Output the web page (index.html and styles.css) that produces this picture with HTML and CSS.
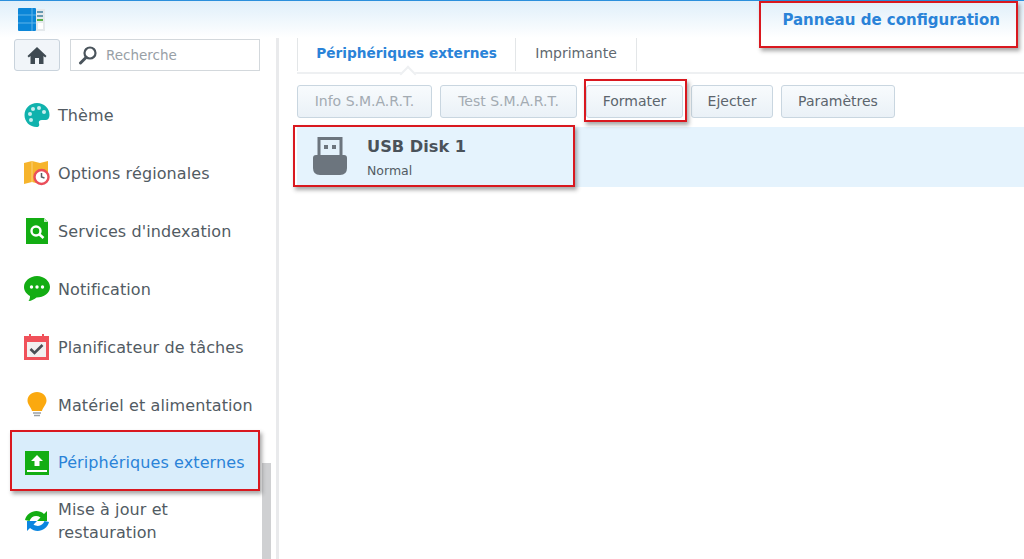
FILE: index.html
```html
<!DOCTYPE html>
<html lang="fr">
<head>
    <meta charset="UTF-8">
    <title>Panneau de configuration</title>
    <link rel="stylesheet" href="styles.css">
</head>
<body>
<div class="topbar">
    <svg class="logo" width="28" height="24" viewBox="0 0 28 24">
        <rect x="0" y="0" width="18" height="23" rx="1" fill="#0b86d8"/>
        <path d="M0 7h18M0 15h18M14 0v23" stroke="#5fb4ea" stroke-width="1"/>
        <rect x="18" y="1" width="9" height="22" fill="#e4e9ec"/>
        <path d="M19 4h6M19 8h6" stroke="#3f7f9c" stroke-width="1.500"/>
        <path d="M19 12h6" stroke="#58b04a" stroke-width="2"/>
        <rect x="20" y="15" width="5" height="6" fill="#fff"/>
    </svg>
    <div class="window-title">Panneau de configuration</div>
</div>
<div class="layout">
    <div class="sidebar">
        <div class="search-row">
            <div class="home-btn">
                <svg width="20" height="19" viewBox="0 0 20 19"><path d="M10 1 0.5 10l1.300 1.400L3.500 9.900V18h4.500v-6h4v6h4.500V9.900l1.700 1.500L19.500 10z" fill="#3f4a52"/></svg>
            </div>
            <div class="search-box">
                <svg width="20" height="20" viewBox="0 0 20 20"><circle cx="12" cy="8" r="5.500" fill="none" stroke="#4a545c" stroke-width="2.200"/><path d="M8 12.500 2.500 18" stroke="#4a545c" stroke-width="3" stroke-linecap="round"/></svg>
                <span>Recherche</span>
            </div>
        </div>
        <div class="menu">
            <div class="menu-item">
                <svg width="26" height="26" viewBox="0 0 26 26"><path d="M13 1C6 1 .5 6 .5 13S6 25 12.500 25c3 0 3-2 2.500-3.500-.7-2 .5-3.500 3-3.500h3.500c2.500 0 4-2 4-5C25.500 6 20 1 13 1z" fill="#10b2ad"/><circle cx="6" cy="12" r="2" fill="#c6eeee"/><circle cx="9" cy="7" r="2" fill="#c6eeee"/><circle cx="15" cy="6" r="2" fill="#c6eeee"/><circle cx="7" cy="18" r="2" fill="#c6eeee"/><circle cx="20" cy="10" r="2" fill="#c6eeee"/></svg>
                <span>Thème</span>
            </div>
            <div class="menu-item">
                <svg width="26" height="26" viewBox="0 0 26 26"><path d="M0 3l8-2 8 2 8-2v14H16v9l-8-2-8 2z" fill="#f6b42c"/><path d="M8 1v21" stroke="#fbd27a" stroke-width="1"/><circle cx="17.500" cy="17" r="7" fill="#fff" stroke="#ea4e5a" stroke-width="2.400"/><path d="M17.500 13v4l3 1" fill="none" stroke="#5a5f66" stroke-width="1.500"/></svg>
                <span>Options régionales</span>
            </div>
            <div class="menu-item">
                <svg width="26" height="26" viewBox="0 0 26 26"><path d="M2 0h18l4 4v22H2z" fill="#13ad13"/><path d="M20 0l4 4h-4z" fill="#bfeabf"/><circle cx="12" cy="13" r="4.500" fill="none" stroke="#fff" stroke-width="2.400"/><path d="M15.500 16.500l4 3.500" stroke="#fff" stroke-width="2.600"/></svg>
                <span>Services d'indexation</span>
            </div>
            <div class="menu-item">
                <svg width="26" height="26" viewBox="0 0 26 26"><path d="M13 0C6 0 0 5 0 11c0 4 2.500 7 6 9 0 2-.5 4-1.500 5 3 0 6-2 8-3.500 7.500 0 13.500-4.500 13.500-10.500S20 0 13 0z" fill="#13ad13"/><circle cx="7.500" cy="11" r="1.700" fill="#fff"/><circle cx="13" cy="11" r="1.700" fill="#fff"/><circle cx="18.500" cy="11" r="1.700" fill="#fff"/></svg>
                <span>Notification</span>
            </div>
            <div class="menu-item">
                <svg width="26" height="26" viewBox="0 0 26 26"><rect x="0" y="2" width="25" height="24" fill="#f0515a"/><rect x="3" y="8" width="19" height="15" fill="#f2f0f0"/><rect x="5" y="0" width="2" height="4" fill="#f0515a"/><rect x="18" y="0" width="2" height="4" fill="#f0515a"/><path d="M6.500 15l4 4 8-8" fill="none" stroke="#4a4f56" stroke-width="2.600"/></svg>
                <span>Planificateur de tâches</span>
            </div>
            <div class="menu-item">
                <svg width="26" height="26" viewBox="0 0 26 26"><path d="M13 0c-5.500 0-9.500 4-9.500 8.500 0 4 3.500 6.500 4.500 10.500h10c1-4 4.500-6.500 4.500-10.500C22.500 4 18.500 0 13 0z" fill="#fba90f"/><path d="M9 21h8M10 23.500h6" stroke="#9aa0a5" stroke-width="1.600"/></svg>
                <span>Matériel et alimentation</span>
            </div>
            <div class="menu-item selected">
                <svg width="26" height="26" viewBox="0 0 26 26"><rect x="1" y="1" width="24" height="24" fill="#13ad13"/><path d="M13 5l6 6h-3.500v5h-5v-5H7z" fill="#fff"/><rect x="3" y="20" width="20" height="2" fill="#fff"/></svg>
                <span>Périphériques externes</span>
            </div>
            <div class="menu-item">
                <svg width="26" height="26" viewBox="0 0 26 26"><path d="M1 12C3 4 13 0 20 6l3-3v10h-10l3.500-3.500C12 6.500 7 8.500 5.500 13z" fill="#13ad13"/><path d="M25 14c-2 8-12 12-19 6l-3 3V13h10l-3.500 3.500C14 19.500 19 17.500 20.500 13z" fill="#0b86e0"/></svg>
                <span>Mise à jour et<br>restauration</span>
            </div>
        </div>
        <div class="scrollbar"></div>
    </div>
    <div class="main">
        <div class="tabs">
            <div class="tab active">Périphériques externes</div>
            <div class="tab">Imprimante</div>
        </div>
        <div class="toolbar">
            <div class="btn disabled info">Info S.M.A.R.T.</div>
            <div class="btn disabled test">Test S.M.A.R.T.</div>
            <div class="btn format">Formater</div>
            <div class="btn eject">Ejecter</div>
            <div class="btn params">Paramètres</div>
        </div>
        <div class="disk-row">
            <svg width="34" height="38" viewBox="0 0 34 38"><path d="M6 1.500h22v18H6z" fill="#e3f1fb" stroke="#6c757e" stroke-width="3"/><rect x="11" y="8" width="4" height="4" fill="#6c757e"/><rect x="19" y="8" width="4" height="4" fill="#6c757e"/><path d="M3 18h28q3 0 3 3v10q0 7-7 7H7q-7 0-7-7V21q0-3 3-3z" fill="#6c757e"/></svg>
            <div class="disk-info">
                <div class="disk-name">USB Disk 1</div>
                <div class="disk-status">Normal</div>
            </div>
        </div>
    </div>
</div>
<div class="mark mark-title"></div>
<div class="mark mark-format"></div>
<div class="mark mark-disk"></div>
<div class="mark mark-menu"></div>
</body>
</html>
```

FILE: styles.css
```css
* {
    box-sizing: border-box;
}
html, body {
    margin: 0;
    height: 559px;
    overflow: hidden;
    background: #fff;
    font-family: "DejaVu Sans", sans-serif;
    color: #525b63;
}
.topbar {
    height: 38px;
    border-top: 1px solid #2a8fdc;
    background: linear-gradient(#dfeffa, #fff);
    display: flex;
    justify-content: space-between;
    padding: 7px 24px 0 18px;
}
.window-title {
    font-size: 15px;
    font-weight: bold;
    color: #2a83d8;
    padding-top: 3px;
}
.layout {
    display: flex;
    height: 521px;
}
.sidebar {
    width: 279px;
    border-right: 3px solid #e9eaec;
    padding: 1px 0 0 14px;
    position: relative;
}
.search-row {
    display: flex;
    gap: 10px;
    height: 32px;
}
.home-btn {
    width: 46px;
    border: 1px solid #c9d3dc;
    border-radius: 3px;
    background: #f1f5f9;
    display: flex;
    align-items: center;
    justify-content: center;
}
.search-box {
    width: 190px;
    border: 1px solid #d3d8dc;
    display: flex;
    align-items: center;
    gap: 8px;
    padding-left: 7px;
    font-size: 13.500px;
    color: #98a0a6;
}
.menu {
    margin: 15px 0 0 -4px;
    width: 250px;
}
.menu-item {
    height: 58px;
    display: flex;
    align-items: center;
    gap: 8px;
    padding-left: 14px;
    font-size: 16px;
    letter-spacing: .1px;
    line-height: 23px;
    white-space: nowrap;
}
.menu-item.selected {
    height: 60px;
    margin: -3px 0 1px;
    padding-top: 3px;
    background: #d9edfb;
    color: #2a83d8;
}
.scrollbar {
    position: absolute;
    left: 262px;
    top: 425px;
    width: 9px;
    height: 96px;
    background: #cfd0d2;
}
.main {
    flex: 1;
    padding-left: 18px;
}
.tabs {
    height: 36px;
    display: flex;
    border-bottom: 2px solid #eef0f2;
    position: relative;
}
.tab {
    width: 121px;
    height: 33px;
    border-right: 1px solid #e3e6e8;
    font-size: 14px;
    line-height: 31px;
    text-align: center;
    color: #60686f;
}
.tab.active {
    width: 219px;
    border-left: 1px solid #e3e6e8;
    font-size: 13.700px;
    font-weight: bold;
    color: #2a83d8;
    position: relative;
}
.tab.active::after {
    content: "";
    position: absolute;
    left: 104px;
    top: 30px;
    width: 10px;
    height: 10px;
    background: #fff;
    border-top: 2px solid #eef0f2;
    border-left: 2px solid #eef0f2;
    transform: rotate(45deg);
}
.toolbar {
    display: flex;
    gap: 8px;
    margin-top: 11px;
}
.btn {
    height: 33px;
    border: 1px solid #c9d6e0;
    border-radius: 3px;
    background: linear-gradient(#f8fbfd, #eaf1f7);
    font-size: 14px;
    line-height: 31px;
    text-align: center;
    color: #5c656d;
}
.btn.disabled {
    color: #a3abb2;
}
.info { width: 135px; }
.test { width: 137px; }
.format { width: 97px; margin-left: 1px; }
.eject { width: 82px; }
.params { width: 114px; }
.disk-row {
    margin-top: 9px;
    height: 60px;
    background: #e5f3fd;
    display: flex;
    align-items: flex-start;
    gap: 20px;
    padding: 10px 0 0 16px;
}
.disk-name {
    font-size: 16.200px;
    font-weight: bold;
    line-height: 19px;
    color: #4a525a;
}
.disk-status {
    font-size: 12.500px;
    line-height: 15px;
    margin-top: 7px;
}
.mark {
    position: absolute;
    border: 2px solid #d9181f;
    box-shadow: 2px 3px 4px rgba(60, 60, 60, .45);
}
.mark-title { left: 759px; top: 1px; width: 259px; height: 47px; }
.mark-format { left: 584px; top: 79px; width: 103px; height: 43px; }
.mark-disk { left: 293px; top: 125px; width: 282px; height: 62px; }
.mark-menu { left: 10px; top: 430px; width: 250px; height: 61px; }
```
